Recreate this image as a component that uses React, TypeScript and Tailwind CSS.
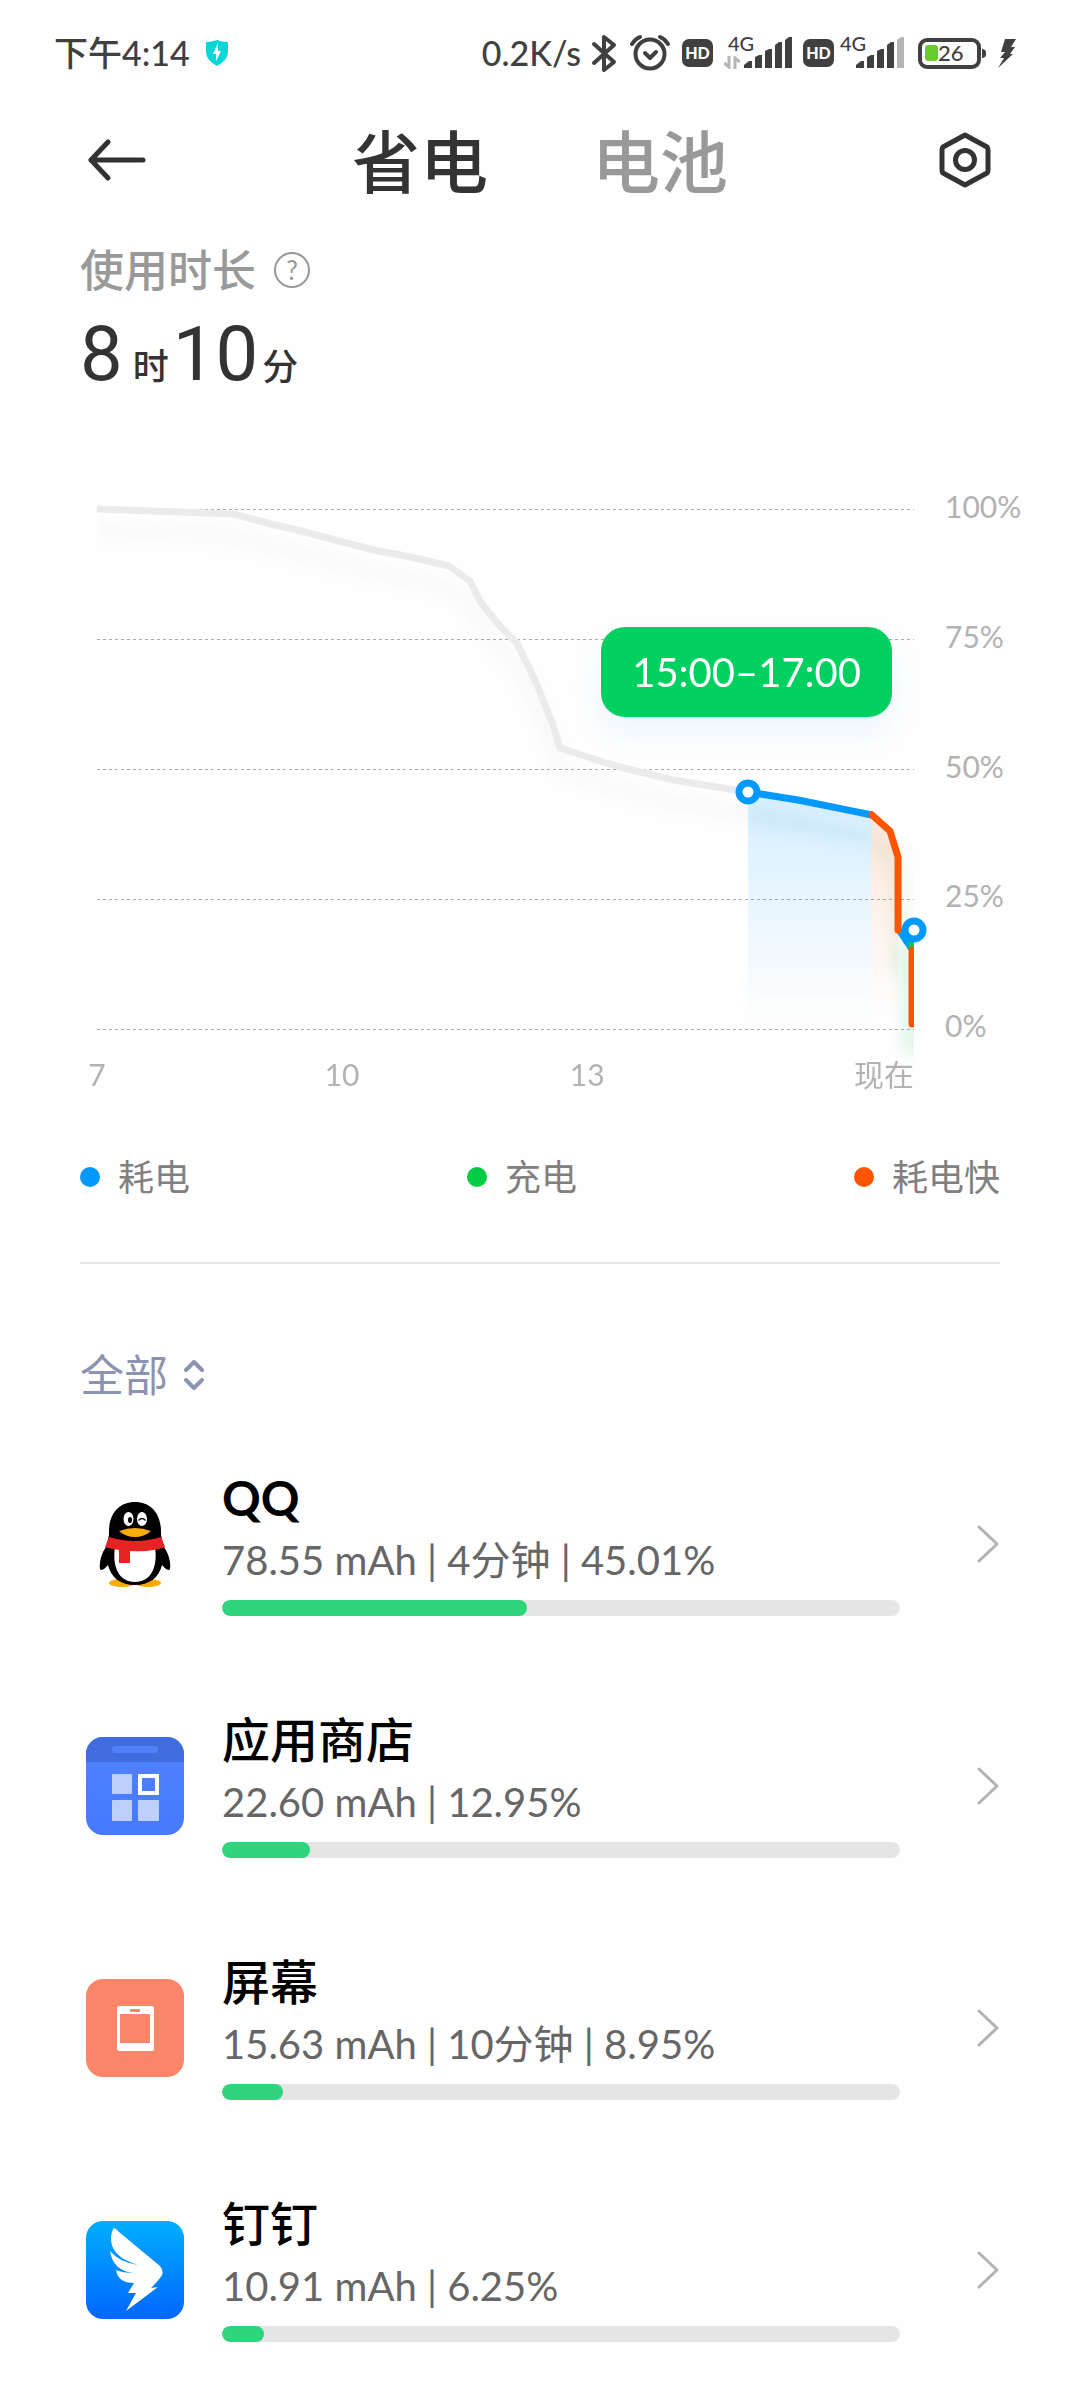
import React from "react";

type AppUsage = {
  name: string;
  nameWeight: string;
  detail: string;
  percent: number;
  icon: React.ReactNode;
};

const LEVELS = ["100%", "75%", "50%", "25%", "0%"];

const LEGEND = [
  { label: "耗电", dot: "bg-[#0099ff]" },
  { label: "充电", dot: "bg-[#00cc44]" },
  { label: "耗电快", dot: "bg-[#ff5500]" },
];

const GREY_LINE =
  "0,0 136,5 174,15 200,21 242,32 281,42 309,47 331,52 352,57 373,72 384,94 402,116 420,134 440,176 456,216 463,239 506,253 523,258 576,271 651,283";
const BLUE_LINE = "651,283 701,291 775,306";
const RED_LINE = "775,306 793,322 801,348 801,421";

function HdBadge() {
  return (
    <span className="flex h-7 w-[31px] items-center justify-center rounded-[7px] bg-[#404040] text-[16px] leading-none font-black text-white">
      HD
    </span>
  );
}

function SignalBars({ weak }: { weak?: boolean }) {
  return (
    <svg width="48" height="32" viewBox="0 0 48 32" fill="#404040" aria-hidden="true">
      <path d="M0 31v-3l5-4h3v7z" />
      <path d="M11 31V20l4-2h3v13z" />
      <path d="M21 31V14l4-2h3v19z" />
      <path d="M31 31V8l4-3h3v26z" />
      <path d="M41 31V3l4-3h3v31z" fill={weak ? "#b5b5b5" : "#404040"} />
    </svg>
  );
}

function StatusBar() {
  return (
    <div className="flex h-[34px] items-center justify-between pr-16 pl-[54px] text-[34px] leading-[34px] font-medium text-[#404040]">
      <div className="flex items-center gap-4">
        <span>下午4:14</span>
        <svg width="22" height="26" viewBox="0 0 22 26" aria-hidden="true">
          <path d="M0 2Q6 2 11 0Q16 2 22 2V12Q22 20 11 26Q0 20 0 12Z" fill="#0ad6da" />
          <path d="M12 3L7 14h3v7l5-10h-3z" fill="#fff" />
        </svg>
      </div>
      <div className="flex items-center">
        <span>0.2K/s</span>
        <svg className="ml-[10px]" width="26" height="39" viewBox="0 0 26 39" fill="none" stroke="#404040" strokeWidth="4" strokeLinejoin="round" strokeLinecap="round" aria-hidden="true">
          <path d="M3 10L23 28L13 36V3L23 11L3 29" />
        </svg>
        <svg className="ml-3" width="42" height="38" viewBox="0 0 42 38" fill="none" stroke="#404040" strokeLinecap="round" strokeLinejoin="round" aria-hidden="true">
          <circle cx="21" cy="20" r="14.500" strokeWidth="4" />
          <path d="M16 19l5 5l6-6" strokeWidth="4" />
          <path d="M3 10Q6 5 11 3M39 10Q36 5 31 3" strokeWidth="4" />
        </svg>
        <span className="ml-[11px] flex">
          <HdBadge />
        </span>
        <span className="relative ml-[31px] flex">
          <span className="absolute -top-1 -left-4 text-[20px] leading-[20px]">4G</span>
          <svg className="absolute bottom-0 -left-5" width="16" height="13" viewBox="0 0 16 13" fill="none" stroke="#b5b5b5" strokeWidth="3" aria-hidden="true">
            <path d="M5 0v11L0 7M11 13V2l5 4" />
          </svg>
          <SignalBars />
        </span>
        <span className="ml-[11px] flex">
          <HdBadge />
        </span>
        <span className="relative ml-[22px] flex">
          <span className="absolute -top-1 -left-4 text-[20px] leading-[20px]">4G</span>
          <SignalBars weak />
        </span>
        <span className="ml-[14px] flex h-[31px] w-[63px] items-center rounded-[9px] border-[4px] border-[#404040] pl-[3px] text-[22px] leading-[22px]">
          <span className="h-4 w-[13px] rounded-[3px] bg-[#6acb2d]" />
          <span>26</span>
        </span>
        <span className="ml-px h-[9px] w-1 rounded-r bg-[#404040]" />
        <svg className="ml-3" width="18" height="29" viewBox="0 0 18 29" fill="#404040" aria-hidden="true">
          <path d="M7 0h11l-5 8h4l-5 7h3L0 29l6-10H2l5-6H3z" />
        </svg>
      </div>
    </div>
  );
}

function Header() {
  return (
    <header className="mt-12 grid grid-cols-[1fr_auto_1fr] grid-rows-[84px] items-center px-[88px]">
      <button type="button" aria-label="返回" className="justify-self-start">
        <svg width="58" height="42" viewBox="0 0 58 42" fill="none" stroke="#333" strokeWidth="5" strokeLinecap="round" strokeLinejoin="round">
          <path d="M20 3L3 21L20 39M3 21H55" />
        </svg>
      </button>
      <div role="tablist" className="flex gap-[104px] pt-1 text-[68px] leading-[84px] font-medium">
        <button type="button" role="tab" aria-selected="true" className="text-[#333]">
          省电
        </button>
        <button type="button" role="tab" aria-selected="false" className="text-[#999]">
          电池
        </button>
      </div>
      <button type="button" aria-label="设置" className="justify-self-end">
        <svg width="54" height="56" viewBox="0 0 54 56" fill="none" stroke="#333" strokeWidth="5" strokeLinejoin="round">
          <path d="M27 3L49 15Q50 16 50 18V38Q50 40 49 41L27 53L5 41Q4 40 4 38V18Q4 16 5 15Z" />
          <circle cx="27" cy="28" r="9.500" />
        </svg>
      </button>
    </header>
  );
}

function UsageChart() {
  return (
    <section className="mt-[111px] flex gap-[31px] pr-[60px] pl-[97px] text-[30px] leading-[30px] text-[#b2b2b2]">
      <div className="relative min-w-0 flex-1">
        <svg className="block w-full overflow-visible" viewBox="0 0 817 520" role="img" aria-label="电量曲线">
          <defs>
            <clipPath id="plot">
              <rect x="0" y="-20" width="817" height="580" />
            </clipPath>
            <linearGradient id="blueFill" x1="0" y1="0" x2="0" y2="1">
              <stop offset="0" stopColor="#0099ff" stopOpacity="0.160" />
              <stop offset="1" stopColor="#0099ff" stopOpacity="0" />
            </linearGradient>
            <linearGradient id="redFill" x1="0" y1="0" x2="0" y2="1">
              <stop offset="0" stopColor="#ff5500" stopOpacity="0.140" />
              <stop offset="1" stopColor="#ff5500" stopOpacity="0" />
            </linearGradient>
            <filter id="soft" x="-10%" y="-10%" width="120%" height="130%">
              <feGaussianBlur stdDeviation="7" />
            </filter>
          </defs>
          <g stroke="#aaa" strokeWidth="1" strokeDasharray="3 3">
            {[0, 130, 260, 390, 520].map((y) => (
              <line key={y} x1="0" x2="817" y1={y + 0.5} y2={y + 0.5} />
            ))}
          </g>
          <g clipPath="url(#plot)" fill="none" strokeWidth="7" strokeLinejoin="round">
            <path d="M651 283L701 291L775 306V515H651Z" fill="url(#blueFill)" />
            <path d="M775 306L793 322L801 348V510H775Z" fill="url(#redFill)" />
            <g filter="url(#soft)" strokeWidth="18">
              <polyline points={GREY_LINE} stroke="#000" strokeOpacity="0.018" transform="translate(0 22)" />
              <polyline points={BLUE_LINE} stroke="#0088cc" strokeOpacity="0.060" transform="translate(0 24)" />
              <polyline points={RED_LINE} stroke="#77bb55" strokeOpacity="0.100" transform="translate(2 26)" />
              <path d="M803 425L815 460V525" stroke="#22bb66" strokeOpacity="0.150" transform="translate(0 18)" />
            </g>
            <polyline points={GREY_LINE} stroke="#ebebeb" />
            <polyline points={BLUE_LINE} stroke="#0099ff" />
            <path d="M801 422L813 440L817 421Z" fill="#0099ff" stroke="#0099ff" strokeWidth="4" />
            <path d="M815 428V441" stroke="#00c853" />
            <g stroke="#ff5500" strokeLinecap="round">
              <polyline points={RED_LINE} />
              <path d="M815 441V515" />
            </g>
          </g>
          <g fill="#fff" stroke="#0099ff" strokeWidth="7">
            <circle cx="651" cy="283" r="9" />
            <circle cx="817" cy="421" r="9" />
          </g>
        </svg>
        <div className="absolute top-[118px] right-[22px] flex h-[90px] items-center rounded-3xl bg-[#00d060] px-[31px] text-[40px] leading-[40px] text-white shadow-[0_16px_32px_rgba(0,136,255,0.08)]">
          15:00–17:00
        </div>
        <div className="mt-[30px] grid grid-cols-[3fr_3fr_4fr]">
          <span className="-translate-x-1/2 justify-self-start">7</span>
          <span className="-translate-x-1/2 justify-self-start">10</span>
          <div className="flex justify-between">
            <span className="-translate-x-1/2">13</span>
            <span>现在</span>
          </div>
        </div>
      </div>
      <div className="-mt-[18px] mb-[49px] flex w-[75px] flex-col justify-between">
        {LEVELS.map((level) => (
          <span key={level}>{level}</span>
        ))}
      </div>
    </section>
  );
}

function QqIcon() {
  return (
    <svg width="98" height="98" viewBox="0 0 98 98">
      <ellipse cx="36" cy="88" rx="13" ry="4" fill="#faab07" />
      <ellipse cx="62" cy="88" rx="13" ry="4" fill="#faab07" />
      <path d="M23 40C22 20 32 7 49 7S76 20 75 40L78 52C83 59 85 68 84 74Q82 77 76 70C73 83 63 90 49 90S25 83 22 70Q16 77 14 74C13 68 15 59 20 52Z" fill="#000" />
      <path d="M29 52Q49 60 69 52C72 72 65 87 49 87S26 72 29 52Z" fill="#fff" />
      <path d="M23 42Q49 50 75 42L79 52Q68 57 44 56V68H33V55Q25 54 19 52Z" fill="#e82323" />
      <ellipse cx="42.500" cy="24" rx="5" ry="7" fill="#fff" />
      <ellipse cx="56" cy="24" rx="5" ry="7" fill="#fff" />
      <ellipse cx="44" cy="25" rx="2" ry="3" fill="#000" />
      <path d="M53 25Q56 22 59 25" fill="none" stroke="#000" strokeWidth="1.500" strokeLinecap="round" />
      <path d="M33 36Q49 30 65 36Q58 42 49 42T33 36Z" fill="#faab07" />
    </svg>
  );
}

function StoreIcon() {
  return (
    <svg width="98" height="98" viewBox="0 0 98 98">
      <defs>
        <clipPath id="storeClip">
          <rect width="98" height="98" rx="17" />
        </clipPath>
        <linearGradient id="storeBg" x1="0" y1="0" x2="0" y2="1">
          <stop offset="0" stopColor="#5182ff" />
          <stop offset="1" stopColor="#4579ff" />
        </linearGradient>
      </defs>
      <g clipPath="url(#storeClip)">
        <rect width="98" height="98" fill="url(#storeBg)" />
        <rect width="98" height="25" fill="#3f6de0" />
      </g>
      <rect x="26" y="9" width="46" height="7" rx="3" fill="#5280fa" />
      <rect x="26" y="37" width="20" height="20" rx="1" fill="#bfcffc" />
      <rect x="26" y="63" width="20" height="21" rx="1" fill="#bfcffc" />
      <rect x="52" y="63" width="21" height="21" rx="1" fill="#bfcffc" />
      <rect x="54" y="39" width="17" height="17" fill="none" stroke="#fff" strokeWidth="4" />
    </svg>
  );
}

function ScreenIcon() {
  return (
    <svg width="98" height="98" viewBox="0 0 98 98">
      <rect width="98" height="98" rx="17" fill="#fb8569" />
      <rect x="31" y="27" width="37" height="45" rx="2" fill="#fff" />
      <rect x="34" y="35" width="30" height="29" fill="#fb8569" />
      <rect x="44" y="30" width="10" height="3" rx="1" fill="#fb8569" />
    </svg>
  );
}

function DingTalkIcon() {
  return (
    <svg width="98" height="98" viewBox="0 0 98 98">
      <defs>
        <linearGradient id="dingBg" x1="0" y1="0" x2="0" y2="1">
          <stop offset="0" stopColor="#00aeff" />
          <stop offset="1" stopColor="#0066ff" />
        </linearGradient>
      </defs>
      <rect width="98" height="98" rx="17" fill="url(#dingBg)" />
      <path
        d="M28 7Q29 7 33 11L74 45Q78 50 76 54Q74 58 65 67L72 66L40 90L50 72H42L48 62Q32 62 30 49Q37 52 48 52Q27 50 24 30Q33 41 52 44Q24 36 25 16Q26 9 28 7Z"
        fill="#fff"
      />
    </svg>
  );
}

const APPS: AppUsage[] = [
  { name: "QQ", nameWeight: "font-bold", detail: "78.55 mAh | 4分钟 | 45.01%", percent: 45.01, icon: <QqIcon /> },
  { name: "应用商店", nameWeight: "font-medium", detail: "22.60 mAh | 12.95%", percent: 12.95, icon: <StoreIcon /> },
  { name: "屏幕", nameWeight: "font-medium", detail: "15.63 mAh | 10分钟 | 8.95%", percent: 8.95, icon: <ScreenIcon /> },
  { name: "钉钉", nameWeight: "font-medium", detail: "10.91 mAh | 6.25%", percent: 6.25, icon: <DingTalkIcon /> },
];

function AppRow({ app }: { app: AppUsage }) {
  return (
    <li>
      <button type="button" className="flex h-[242px] w-full items-center pr-20 pl-[86px] text-left">
        <span className="shrink-0">{app.icon}</span>
        <span className="ml-[38px] flex flex-1 flex-col">
          <span className={`text-[48px] leading-[52px] text-black ${app.nameWeight}`}>{app.name}</span>
          <span className="mt-[6px] text-[40px] leading-[60px] text-[#666]">{app.detail}</span>
          <span
            role="progressbar"
            aria-label={app.name}
            aria-valuenow={app.percent}
            className="mt-[10px] block h-4 overflow-hidden rounded-full bg-[#e5e5e5]"
          >
            <span className="block h-full rounded-full bg-[#2fd57c]" style={{ width: `${app.percent}%` }} />
          </span>
        </span>
        <svg className="ml-[76px] shrink-0" width="24" height="40" viewBox="0 0 24 40" fill="none" stroke="#b2b2b2" strokeWidth="3" strokeLinecap="round" strokeLinejoin="round" aria-hidden="true">
          <path d="M3 3L21 20L3 37" />
        </svg>
      </button>
    </li>
  );
}

export default function App() {
  return (
    <main className="min-h-screen bg-[#fefefe] pt-9 font-[Lato,'Noto_Sans_CJK_SC',sans-serif]">
      <StatusBar />
      <Header />

      <section className="mt-[46px] px-20">
        <div className="flex h-11 items-center gap-[18px] text-[44px] leading-[44px] text-[#999]">
          <h2 className="font-medium">使用时长</h2>
          <button
            type="button"
            aria-label="使用时长说明"
            className="flex size-9 items-center justify-center rounded-full border-2 border-[#999] text-[26px] leading-none"
          >
            ?
          </button>
        </div>
        <p className="mt-4 flex h-[90px] items-baseline font-[Roboto,'Noto_Sans_CJK_SC',sans-serif] text-[76px] leading-[92px] text-[#333]">
          8<span className="mr-1 ml-[10px] text-[36px] leading-none font-medium">时</span>
          10<span className="ml-1 text-[36px] leading-none font-medium">分</span>
        </p>
      </section>

      <UsageChart />

      <ul className="mt-[70px] flex justify-between px-20 text-[36px] leading-[36px] text-[#808080]">
        {LEGEND.map((item) => (
          <li key={item.label} className="flex items-center gap-[18px]">
            <span className={`size-5 rounded-full ${item.dot}`} />
            {item.label}
          </li>
        ))}
      </ul>

      <hr className="mx-20 mt-[67px] border-t-2 border-[#e5e5e5]" />

      <button type="button" className="mt-[89px] ml-20 flex items-center gap-4 text-[44px] leading-[44px] text-[#8c93b0]">
        全部
        <svg width="20" height="30" viewBox="0 0 20 30" fill="none" stroke="#8c93b0" strokeWidth="4" strokeLinecap="round" strokeLinejoin="round" aria-hidden="true">
          <path d="M2 10L10 2L18 10M2 20L10 28L18 20" />
        </svg>
      </button>

      <ul className="mt-[26px]">
        {APPS.map((app) => (
          <AppRow key={app.name} app={app} />
        ))}
      </ul>
    </main>
  );
}
